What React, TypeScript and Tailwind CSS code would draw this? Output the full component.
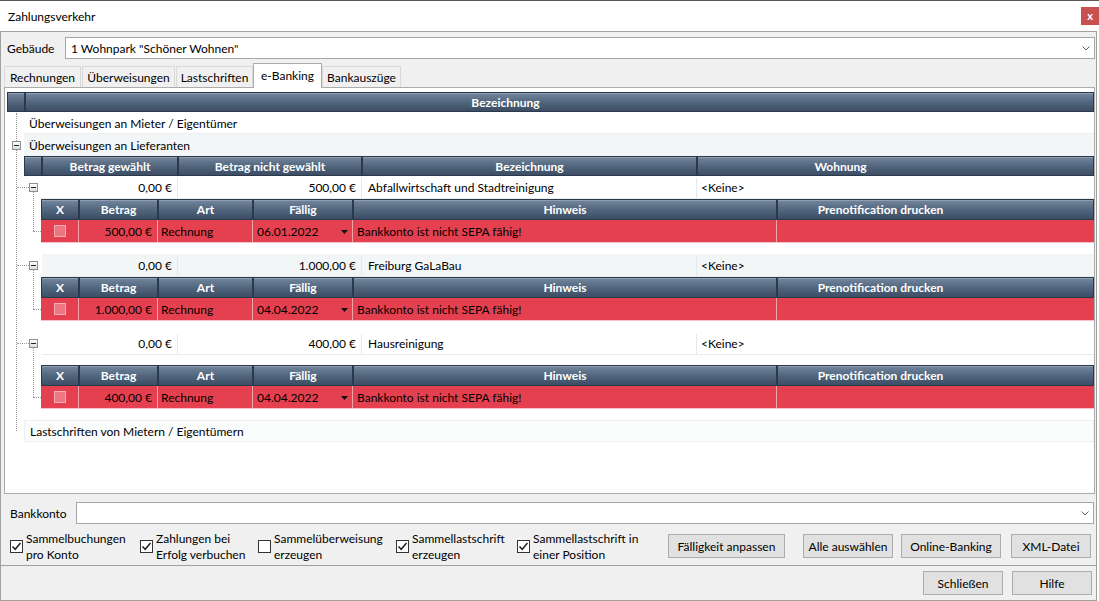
import React from "react";

const HC =
  "flex items-center justify-center h-full border border-[#2b394b] bg-linear-to-b from-[#74879f] via-[#52667e] to-[#3b4e65] text-white font-bold shadow-[inset_0_1px_0_rgba(255,255,255,0.22)] whitespace-nowrap pt-[1px]";

function MinusBox({ className }: { className: string }) {
  return (
    <div
      className={
        "w-[9px] h-[9px] border border-[#8e8f8f] bg-linear-to-b from-white to-[#dcdcdc] flex items-center justify-center " +
        className
      }
    >
      <div className="w-[5px] h-px bg-[#222]" />
    </div>
  );
}

function Check({ checked }: { checked: boolean }) {
  return (
    <div className="w-[13px] h-[13px] border border-[#333] bg-white flex items-center justify-center shrink-0">
      {checked && (
        <svg width="11" height="11" viewBox="0 0 11 11">
          <path d="M1.5 5.5 L4.2 8.3 L9.5 2" fill="none" stroke="#222" strokeWidth="1.5" />
        </svg>
      )}
    </div>
  );
}

function Btn({ children, className }: { children: React.ReactNode; className: string }) {
  return (
    <div
      className={
        "h-[24px] shrink-0 border border-[#adadad] bg-[#e1e1e1] flex items-center justify-center whitespace-nowrap pt-[1px] " +
        className
      }
    >
      {children}
    </div>
  );
}

function Group({
  a,
  b,
  name,
  betrag,
  date,
  shaded,
  late,
}: {
  a: string;
  b: string;
  name: string;
  betrag: string;
  date: string;
  shaded: boolean;
  late: boolean;
}) {
  const rowBg = shaded ? "bg-[#f3f6f7]" : "bg-white";
  return (
    <div className="flex">
      <div className="w-[34px] shrink-0 relative">
        <div className="absolute left-[10px] top-[11px] w-[12px] border-t border-dotted border-[#9a9a9a]" />
        <MinusBox className="absolute left-[22px] top-[7px]" />
        {late ? (
          <>
            <div className="absolute left-[26px] top-[16px] h-[49px] border-l border-dotted border-[#9a9a9a]" />
            <div className="absolute left-[26px] top-[65px] w-[8px] border-t border-dotted border-[#9a9a9a]" />
          </>
        ) : (
          <>
            <div className="absolute left-[26px] top-[16px] h-[39px] border-l border-dotted border-[#9a9a9a]" />
            <div className="absolute left-[26px] top-[55px] w-[8px] border-t border-dotted border-[#9a9a9a]" />
          </>
        )}
      </div>
      <div className="flex-1 flex flex-col">
        <div className={"ml-px h-[23px] flex border-b border-[#e9ecee] pt-[2px] " + rowBg}>
          <div className="w-[136px] flex items-center justify-end pr-[5px] border-r border-[#e6e9eb]">{a}</div>
          <div className="w-[184px] flex items-center justify-end pr-[5px] border-r border-[#e6e9eb]">{b}</div>
          <div className="w-[335px] flex items-center pl-[6px] border-r border-[#e6e9eb]">{name}</div>
          <div className="flex-1 flex items-center pl-[4px]">&lt;Keine&gt;</div>
        </div>
        <div className={"h-[21px] flex bg-[#34455a] " + (late ? "mt-[10px]" : "")}>
          <div className={HC + " w-[38px]"}>X</div>
          <div className={HC + " w-[79px]"}>Betrag</div>
          <div className={HC + " w-[95px]"}>Art</div>
          <div className={HC + " w-[100px]"}>Fällig</div>
          <div className={HC + " w-[424px]"}>Hinweis</div>
          <div className={HC + " flex-1 pr-[110px]"}>Prenotification drucken</div>
        </div>
        <div className="h-[23px] flex bg-[#e5404f] border-b border-[#f7c2c7]">
          <div className="w-[38px] flex items-center justify-center border-r border-[#f2a3aa]">
            <div className="w-[12px] h-[12px] border border-[#f5adb4] bg-[#ec7782]" />
          </div>
          <div className="w-[79px] flex items-center justify-end pr-[5px] pt-[2px] border-r border-[#f2a3aa]">{betrag}</div>
          <div className="w-[95px] flex items-center pl-[3px] pt-[2px] border-r border-[#f2a3aa]">Rechnung</div>
          <div className="w-[100px] flex items-center justify-between pl-[4px] pr-[3px] pt-[2px] border-r border-[#f2a3aa]">
            <span>{date}</span>
            <svg width="7" height="4" viewBox="0 0 7 4" className="mr-[1px]">
              <path d="M0 0 H7 L3.5 4 Z" fill="#111" />
            </svg>
          </div>
          <div className="w-[424px] flex items-center pl-[4px] pt-[2px] border-r border-[#f2a3aa]">
            Bankkonto ist nicht SEPA fähig!
          </div>
          <div className="flex-1" />
        </div>
      </div>
    </div>
  );
}

export default function App() {
  return (
    <div className="w-[1099px] h-[601px] bg-white font-['Lato',sans-serif] text-[12px] leading-[16px] text-black overflow-hidden border-t border-[#5a5a5a] flex flex-col">
      {/* Title bar */}
      <div className="h-[30px] flex items-center justify-between pl-[8px] shrink-0">
        <span className="pt-[2px]">Zahlungsverkehr</span>
        <div className="w-[18px] h-[18px] bg-[#c75050] text-white font-bold text-[11px] flex items-center justify-center leading-none pb-[2px]">
          x
        </div>
      </div>

      {/* Body */}
      <div className="flex-1 mr-[2px] bg-[#f0f0f0] border border-[#a0a0a0] flex flex-col">
        {/* Gebäude */}
        <div className="mt-[5px] h-[22px] flex items-center">
          <div className="w-[64px] pl-[6px] pt-[2px]">Gebäude</div>
          <div className="flex-1 mr-px h-full bg-white border border-[#a6a6a6] flex items-center justify-between pl-[5px] pr-[4px]">
            <span className="pt-[2px]">1 Wohnpark "Schöner Wohnen"</span>
            <svg width="8" height="5" viewBox="0 0 8 5">
              <path d="M0.5 0.5 L4 4 L7.5 0.5" fill="none" stroke="#606060" strokeWidth="1" />
            </svg>
          </div>
        </div>

        {/* Tabs */}
        <div className="mt-[4px] h-[24px] flex items-end pl-[3px] relative z-10">
          <div className="w-[77px] h-[21px] border border-b-0 border-[#d9d9d9] bg-[#f0f0f0] flex items-center justify-center pt-[2px]">Rechnungen</div>
          <div className="ml-[1px] w-[93px] h-[21px] border border-b-0 border-[#d9d9d9] bg-[#f0f0f0] flex items-center justify-center pt-[2px]">Überweisungen</div>
          <div className="ml-[1px] w-[77px] h-[21px] border border-b-0 border-[#d9d9d9] bg-[#f0f0f0] flex items-center justify-center pt-[2px]">Lastschriften</div>
          <div className="w-[69px] h-[25px] -mb-px border border-b-0 border-[#acacac] bg-white flex items-center justify-center">e-Banking</div>
          <div className="w-[79px] h-[21px] border border-b-0 border-[#d9d9d9] bg-[#f0f0f0] flex items-center justify-center pt-[2px]">Bankauszüge</div>
        </div>

        {/* Panel */}
        <div className="ml-[3px] mr-px h-[407px] bg-white border border-[#acacac] flex flex-col">
          {/* main header */}
          <div className="mt-[4px] ml-[2px] h-[20px] flex bg-[#34455a]">
            <div className={HC + " w-[18px]"} />
            <div className={HC + " flex-1 pr-[108px]"}>Bezeichnung</div>
          </div>

          {/* tree */}
          <div className="ml-[2px] relative flex flex-col">
            <div className="absolute left-[9px] top-[1px] h-[318px] border-l border-dotted border-[#9a9a9a]" />
            <MinusBox className="absolute left-[5px] top-[29px]" />

            <div className="ml-[17px] h-[22px] flex items-center pl-[5px] pt-[2px] border-b border-[#eceff1]">
              Überweisungen an Mieter / Eigentümer
            </div>
            <div className="ml-[17px] h-[22px] flex items-center pl-[5px] pt-[2px] bg-[#f3f6f7] rounded-r-[3px]">
              Überweisungen an Lieferanten
            </div>
            <div className="ml-[17px] h-[20px] flex bg-[#34455a]">
              <div className={HC + " w-[18px]"} />
              <div className={HC + " w-[136px]"}>Betrag gewählt</div>
              <div className={HC + " w-[184px]"}>Betrag nicht gewählt</div>
              <div className={HC + " w-[335px]"}>Bezeichnung</div>
              <div className={HC + " flex-1 pr-[110px]"}>Wohnung</div>
            </div>

            <Group a="0,00 €" b="500,00 €" name="Abfallwirtschaft und Stadtreinigung" betrag="500,00 €" date="06.01.2022" shaded={false} late={false} />
            <div className="h-[11px]" />
            <Group a="0,00 €" b="1.000,00 €" name="Freiburg GaLaBau" betrag="1.000,00 €" date="04.04.2022" shaded={true} late={false} />
            <div className="h-[11px]" />
            <Group a="0,00 €" b="400,00 €" name="Hausreinigung" betrag="400,00 €" date="04.04.2022" shaded={false} late={true} />

            <div className="mt-[11px] ml-[17px] h-[22px] flex items-center pl-[5px] pt-[2px] bg-[#fbfcfc] border border-[#edf0f2]">
              Lastschriften von Mietern / Eigentümern
            </div>
          </div>
        </div>

        {/* Bankkonto */}
        <div className="mt-[8px] h-[22px] flex items-center">
          <div className="w-[75px] pl-[9px] pt-[2px]">Bankkonto</div>
          <div className="flex-1 mr-[2px] h-full bg-white border border-[#a6a6a6] flex items-center justify-end pr-[4px]">
            <svg width="8" height="5" viewBox="0 0 8 5">
              <path d="M0.5 0.5 L4 4 L7.5 0.5" fill="none" stroke="#606060" strokeWidth="1" />
            </svg>
          </div>
        </div>

        {/* Options row */}
        <div className="mt-[6px] h-[32px] flex items-center">
          <div className="w-[139px] shrink-0 pl-[9px] flex items-center gap-[3px]">
            <Check checked={true} />
            <div className="leading-[16px] pt-[2px]">Sammelbuchungen<br />pro Konto</div>
          </div>
          <div className="w-[118px] shrink-0 flex items-center gap-[3px]">
            <Check checked={true} />
            <div className="leading-[16px] pt-[2px]">Zahlungen bei<br />Erfolg verbuchen</div>
          </div>
          <div className="w-[138px] shrink-0 flex items-center gap-[3px]">
            <Check checked={false} />
            <div className="leading-[16px] pt-[2px]">Sammelüberweisung<br />erzeugen</div>
          </div>
          <div className="w-[121px] shrink-0 flex items-center gap-[3px]">
            <Check checked={true} />
            <div className="leading-[16px] pt-[2px]">Sammellastschrift<br />erzeugen</div>
          </div>
          <div className="w-[150px] shrink-0 flex items-center gap-[3px]">
            <Check checked={true} />
            <div className="leading-[16px] pt-[2px]">Sammellastschrift in<br />einer Position</div>
          </div>
          <Btn className="w-[117px] ml-[1px]">Fälligkeit anpassen</Btn>
          <Btn className="w-[90px] ml-[18px]">Alle auswählen</Btn>
          <Btn className="w-[100px] ml-[8px]">Online-Banking</Btn>
          <Btn className="w-[80px] ml-[10px]">XML-Datei</Btn>
        </div>

        <div className="mt-[3px] border-t border-[#a0a0a0]" />

        <div className="mt-[5px] flex justify-end pr-[4px]">
          <Btn className="w-[80px]">Schließen</Btn>
          <Btn className="w-[80px] ml-[9px]">Hilfe</Btn>
        </div>
      </div>
    </div>
  );
}
